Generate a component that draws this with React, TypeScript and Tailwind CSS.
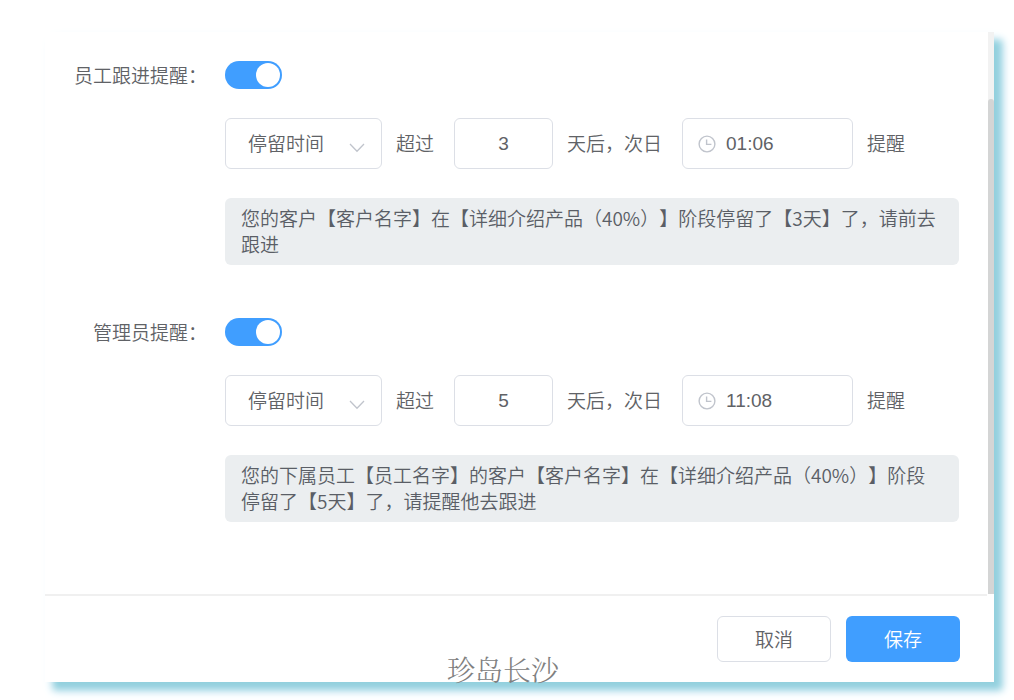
import { useState } from "react";

type ReminderProps = {
  id: string;
  label: string;
  days: string;
  time: string;
  message: string;
};

const CONTROL =
  "h-[51px] rounded-md border border-[#dcdfe6] bg-white text-[19px] text-[#606266] outline-none focus:border-[#409eff]";

function ClockIcon() {
  return (
    <svg
      viewBox="0 0 18 18"
      className="pointer-events-none absolute top-1/2 left-4 size-[18px] -translate-y-1/2"
      fill="none"
      stroke="#c0c4cc"
      strokeWidth="1.4"
      aria-hidden="true"
    >
      <circle cx="9" cy="9" r="7.9" />
      <path d="M8.6 4.6v4.8h4.8" />
    </svg>
  );
}

function ChevronIcon() {
  return (
    <svg
      viewBox="0 0 16 10"
      className="pointer-events-none absolute right-[17px] bottom-4 h-[10px] w-4"
      fill="none"
      stroke="#c0c4cc"
      strokeWidth="1.3"
      aria-hidden="true"
    >
      <path d="M1 1l7 7.2L15 1" />
    </svg>
  );
}

function Reminder({ id, label, days, time, message }: ReminderProps) {
  const [enabled, setEnabled] = useState(true);
  const [dayCount, setDayCount] = useState(days);
  const [clock, setClock] = useState(time);

  return (
    <section className="flex items-start gap-[18px]">
      <label htmlFor={id} className="w-[162px] shrink-0 text-right leading-7 whitespace-nowrap">
        {label}
      </label>
      <div className="flex min-w-0 flex-1 flex-col gap-[29px]">
        <input
          id={id}
          type="checkbox"
          role="switch"
          checked={enabled}
          onChange={(e) => setEnabled(e.target.checked)}
          className="flex h-7 w-[57px] cursor-pointer appearance-none items-center rounded-full bg-[#dcdfe6] px-[2px] before:size-6 before:rounded-full before:bg-white checked:justify-end checked:bg-[#409eff]"
        />
        <div className="flex items-center gap-[14px] whitespace-nowrap">
          <div className="relative">
            <select aria-label="条件" className={`${CONTROL} w-[157px] appearance-none pl-[22px]`}>
              <option>停留时间</option>
            </select>
            <ChevronIcon />
          </div>
          <span className="mr-[6px]">超过</span>
          <input
            aria-label="天数"
            inputMode="numeric"
            value={dayCount}
            onChange={(e) => setDayCount(e.target.value)}
            className={`${CONTROL} w-[99px] text-center font-['Liberation_Sans',sans-serif]`}
          />
          <span className="mr-[6px]">天后，次日</span>
          <div className="relative">
            <input
              aria-label="提醒时间"
              value={clock}
              onChange={(e) => setClock(e.target.value)}
              className={`${CONTROL} w-[171px] pl-[43px] font-['Liberation_Sans',sans-serif]`}
            />
            <ClockIcon />
          </div>
          <span>提醒</span>
        </div>
        <p className="rounded-md bg-[#ebeef0] px-4 pt-[7px] pb-2 leading-[26px] text-[#5a5e66] [text-spacing-trim:space-all]">
          {message}
        </p>
      </div>
    </section>
  );
}

export default function App() {
  return (
    <main className="min-h-screen bg-white pt-8 pr-5 pb-[18px] pl-[45px] font-['Noto_Sans_CJK_SC',sans-serif] text-[19px] font-[350] text-[#606266]">
      <div className="bg-white shadow-[8px_8px_7px_#92d0de,8px_8px_12px_#dceffa]">
        <div className="flex">
          <div className="flex min-w-0 flex-1 flex-col gap-[53px] pt-[29px] pr-[29px] pb-[72px]">
            <Reminder
              id="staff-reminder"
              label="员工跟进提醒："
              days="3"
              time="01:06"
              message="您的客户【客户名字】在【详细介绍产品（40%）】阶段停留了【3天】了，请前去跟进"
            />
            <Reminder
              id="manager-reminder"
              label="管理员提醒："
              days="5"
              time="11:08"
              message="您的下属员工【员工名字】的客户【客户名字】在【详细介绍产品（40%）】阶段停留了【5天】了，请提醒他去跟进"
            />
          </div>
          <div className="flex w-[6px] flex-col bg-[#f2f2f2] pt-[67px]">
            <div className="flex-1 rounded-t-sm bg-[#d4d5d5]" />
          </div>
        </div>
        <footer className="relative mr-[7px] flex justify-end gap-[15px] border-t-2 border-[#f0f0f0] py-5 pr-[27px]">
          <button
            type="button"
            className="h-[46px] w-[114px] rounded-md border border-[#dcdfe6] bg-white"
          >
            取消
          </button>
          <button type="button" className="h-[46px] w-[114px] rounded-md bg-[#409eff] text-white">
            保存
          </button>
          <span className="pointer-events-none absolute bottom-[-5px] left-[402px] font-['Noto_Serif_CJK_SC','Noto_Sans_CJK_SC',serif] text-[28px] leading-9 font-light text-[#808080]">
            珍岛长沙
          </span>
        </footer>
      </div>
    </main>
  );
}
